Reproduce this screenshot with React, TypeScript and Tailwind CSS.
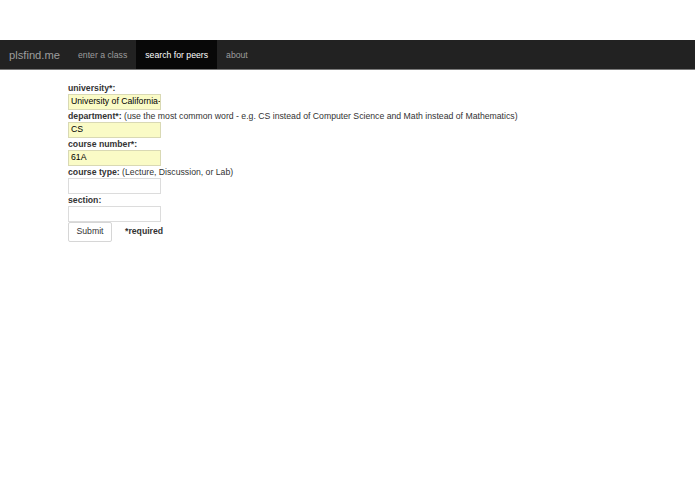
import type { ReactNode } from "react";

const font = { fontFamily: '"Liberation Sans", Arial, Helvetica, sans-serif' };

function Field({ label, hint, value, filled }: { label: string; hint?: string; value?: string; filled?: boolean }) {
  return (
    <div>
      <div className="h-3 flex items-center text-[8.7px] leading-3 text-[#333] whitespace-nowrap">
        <span className="font-bold">{label}</span>
        {hint && <span>&nbsp;{hint}</span>}
      </div>
      <div
        className={
          "h-4 w-[93px] border px-[2px] flex items-center text-[8.7px] text-black overflow-hidden whitespace-nowrap " +
          (filled ? "bg-[#fafbc6] border-[#d9d9b4]" : "bg-white border-[#dcdcdc]")
        }
      >
        {value}
      </div>
    </div>
  );
}

function NavLink({ children, active }: { children: ReactNode; active?: boolean }) {
  return (
    <div
      className={
        "h-full flex items-center px-[9px] pt-[2px] text-[8.7px] " +
        (active ? "bg-[#080808] text-white" : "text-[#9d9d9d]")
      }
    >
      {children}
    </div>
  );
}

export default function App() {
  return (
    <div className="w-[695px] h-[494px] bg-white pt-10" style={font}>
      <nav className="h-[30px] bg-[#222] border-b border-[#7a7a7a] flex items-stretch">
        <div className="flex items-center px-[9px] pt-[2px] text-[11.2px] text-[#9d9d9d]">plsfind.me</div>
        <NavLink>enter a class</NavLink>
        <NavLink active>search for peers</NavLink>
        <NavLink>about</NavLink>
      </nav>

      <form className="pl-[68px] pt-3">
        <Field label="university*:" value="University of California-" filled />
        <Field
          label="department*:"
          hint="(use the most common word - e.g. CS instead of Computer Science and Math instead of Mathematics)"
          value="CS"
          filled
        />
        <Field label="course number*:" value="61A" filled />
        <Field label="course type:" hint="(Lecture, Discussion, or Lab)" />
        <Field label="section:" />
        <div className="flex items-center">
          <button
            type="button"
            className="h-5 w-11 border border-[#d6d6d6] rounded-[2px] bg-white text-[8.7px] text-[#333]"
          >
            Submit
          </button>
          <span className="ml-[13px] text-[8.7px] font-bold text-[#333]">*required</span>
        </div>
      </form>
    </div>
  );
}
